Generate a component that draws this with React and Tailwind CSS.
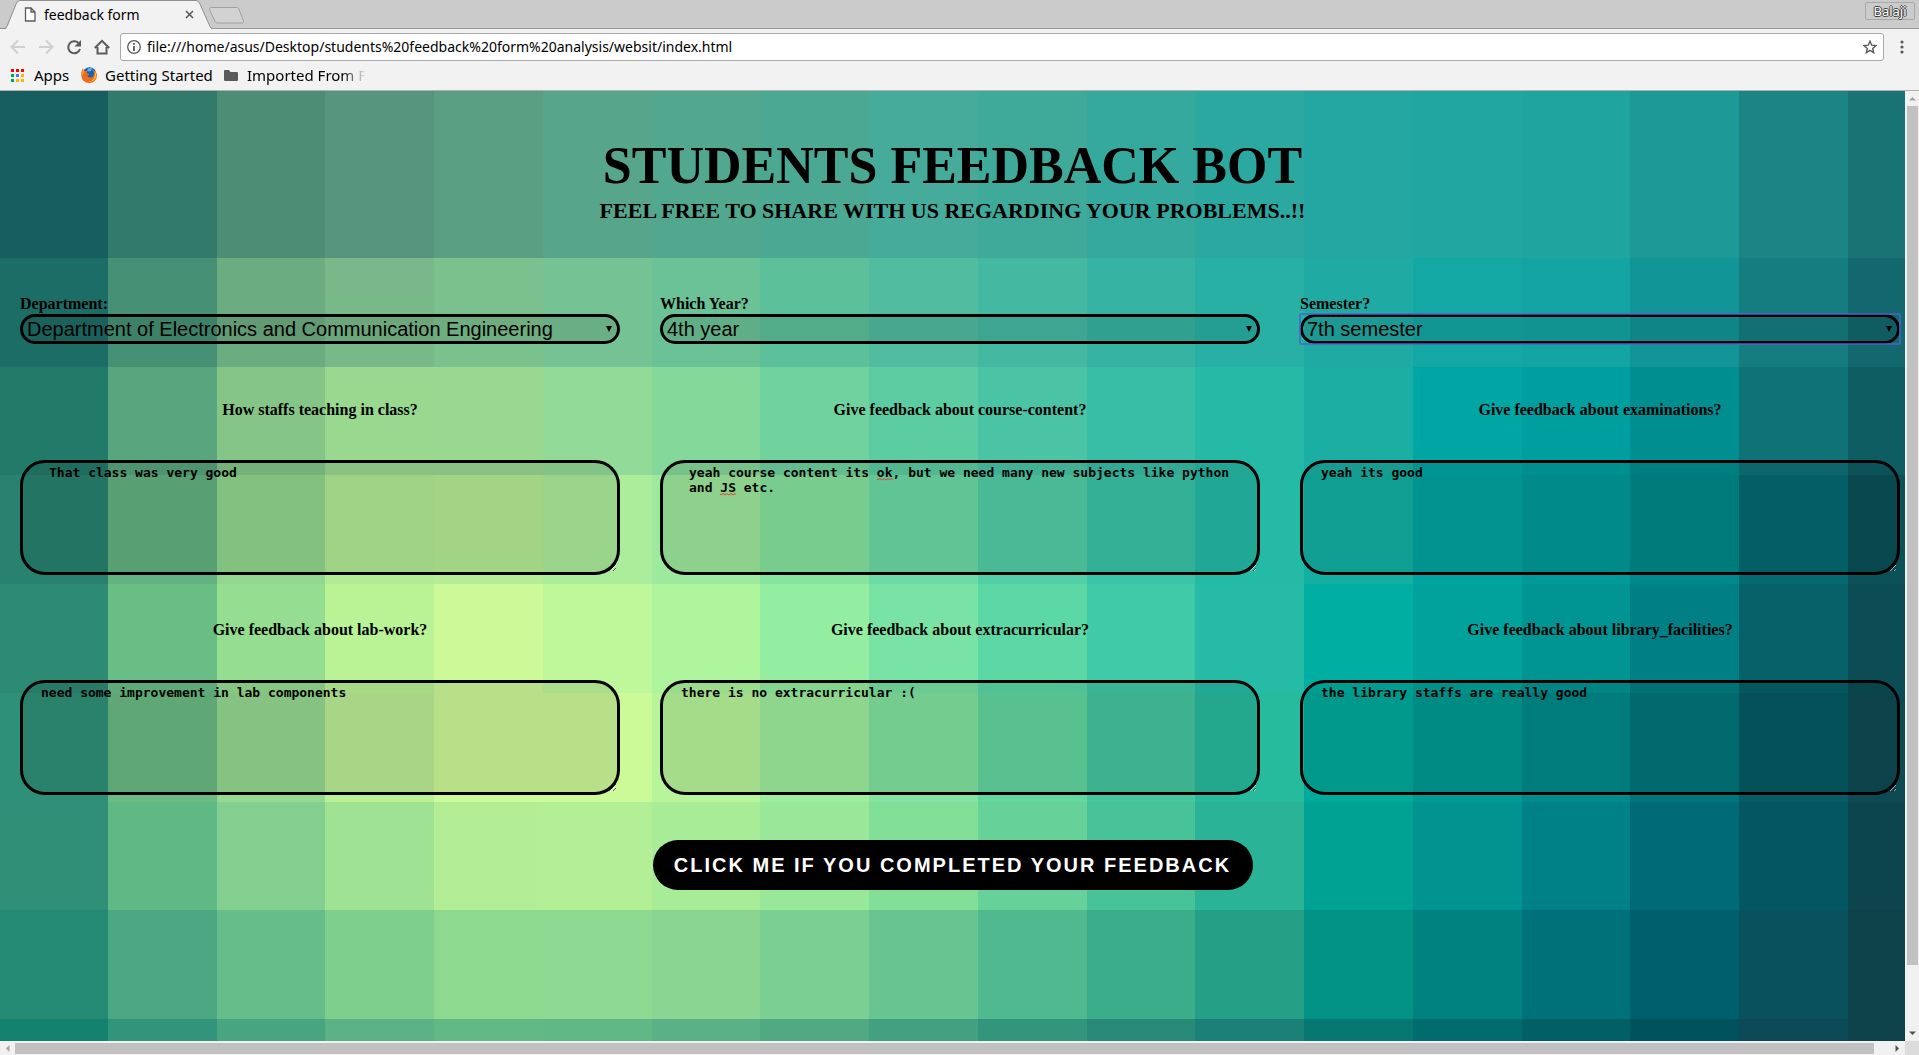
import React, { useState } from "react";

const TILE = 108.75;
const FIRST_BAND = 58;

const BANDS = [
  ["#175f5f", "#327a6c", "#4d8d76", "#57957e", "#5a9f84", "#57a58a", "#52a78f", "#4ba893", "#46ab9a", "#3fa99a", "#35a99d", "#2ba9a1", "#24a7a3", "#22a6a1", "#1fa4a0", "#1d9a97", "#1d8484", "#197375"],
  ["#1d6d67", "#469075", "#6cac81", "#79b989", "#7ac18e", "#75c294", "#6bc297", "#5cc09a", "#51bca0", "#44b8a1", "#36b3a2", "#29b0a4", "#1faba3", "#14a8a5", "#13a4a3", "#119597", "#157c7f", "#12686c"],
  ["#227a69", "#58a57e", "#85c688", "#9ad890", "#9ad892", "#91da98", "#84d899", "#70d39f", "#5ccda2", "#4ac4a5", "#38bea6", "#25baa5", "#1baea3", "#00a6a4", "#009f9f", "#008e90", "#0f7277", "#0d5d62"],
  ["#298270", "#63b282", "#91d78f", "#b3ea95", "#b6ec96", "#abed9a", "#9de99d", "#86e49f", "#6cdba6", "#53cfa8", "#3ac4a8", "#24baa6", "#12b0a3", "#00a4a0", "#009a9a", "#00898b", "#046a71", "#0b5157"],
  ["#2d8a74", "#69be86", "#95dd90", "#baf395", "#cdf999", "#bff89a", "#adf49c", "#94eea1", "#78e3a4", "#5bd8a6", "#40caa8", "#26bba7", "#00afa2", "#00a29b", "#009593", "#007f84", "#066169", "#0c4c54"],
  ["#2f9079", "#6abc83", "#96da91", "#bbef96", "#cdfa98", "#cdfa98", "#b8f59a", "#9fee9d", "#82e4a0", "#64d6a0", "#46c79f", "#27bb9e", "#00ab9b", "#009b93", "#008b8c", "#00767b", "#065b64", "#0e4a53"],
  ["#2f9077", "#60b985", "#82cf90", "#9fe293", "#b3ee96", "#b3ef97", "#a9ec98", "#99e798", "#81df98", "#66d199", "#48c299", "#2ab397", "#00a293", "#00938f", "#008087", "#006b77", "#025762", "#0d454f"],
  ["#258a73", "#4ba883", "#67bd89", "#7ece8e", "#8ed990", "#8ed991", "#8ad592", "#7bcf92", "#68c592", "#51b98f", "#3cad8a", "#25a087", "#039384", "#008280", "#007179", "#005f6d", "#08515d", "#0d424b"],
  ["#15816f", "#32947a", "#49a580", "#5cb284", "#62b986", "#61b887", "#5bb187", "#50a982", "#43a080", "#33957b", "#288a77", "#1b8077", "#077771", "#006c6d", "#006065", "#00535c", "#0c4a57", "#0d424b"],
];

const edge = (i) => Math.round(i * TILE) - 1;
const bandTop = (i) => (i === 0 ? 0 : Math.round(FIRST_BAND + i * TILE));

function Mosaic() {
  return (
    <svg className="absolute inset-0 size-full" aria-hidden="true" shapeRendering="crispEdges">
      {BANDS.map((band, r) =>
        band.map((fill, c) => (
          <rect
            key={`${r}-${c}`}
            x={edge(c)}
            y={bandTop(r)}
            width={edge(c + 1) - edge(c)}
            height={bandTop(r + 1) - bandTop(r)}
            fill={fill}
          />
        ))
      )}
    </svg>
  );
}

const SELECTS = [
  {
    id: "department",
    label: "Department:",
    options: ["Department of Electronics and Communication Engineering", "Department of Computer Science and Engineering"],
  },
  { id: "year", label: "Which Year?", options: ["4th year", "3rd year", "2nd year", "1st year"] },
  { id: "semester", label: "Semester?", options: ["7th semester", "8th semester"], active: true },
];

const QUESTIONS = [
  { id: "teaching", label: "How staffs teaching in class?", text: "That class was very good", wide: true },
  {
    id: "course",
    label: "Give feedback about course-content?",
    text: "yeah course content its ok, but we need many new subjects like python and JS etc.",
    wide: true,
    marks: true,
  },
  { id: "exams", label: "Give feedback about examinations?", text: "yeah its good" },
  { id: "lab", label: "Give feedback about lab-work?", text: "need some improvement in lab components" },
  { id: "extra", label: "Give feedback about extracurricular?", text: "there is no extracurricular :(" },
  { id: "library", label: "Give feedback about library_facilities?", text: "the library staffs are really good" },
];

function Choice({ id, label, options, active }) {
  return (
    <div className="flex flex-col">
      <label htmlFor={id} className="self-start text-base leading-5 font-bold">
        {label}
      </label>
      <div className="relative">
        <select
          id={id}
          className="block h-[30px] w-full appearance-none rounded-[15px] border-3 border-black bg-black/10 pl-1 font-['Liberation_Sans',sans-serif] text-xl leading-6 outline-none"
        >
          {options.map((o) => (
            <option key={o}>{o}</option>
          ))}
        </select>
        {active && <span className="pointer-events-none absolute -inset-px rounded-xs border-2 border-[#4a66cc]/75" />}
        <svg className="pointer-events-none absolute top-3 right-2 h-1.5 w-1.5" viewBox="0 0 6 6" aria-hidden="true">
          <path d="M0 0h6L3 6z" fill="#000" />
        </svg>
      </div>
    </div>
  );
}

function Squiggle({ className }) {
  return (
    <svg className={className} viewBox="0 0 16 3" aria-hidden="true">
      <path d="M0 1l1 1 2-1.500 2 1.500 2-1.500 2 1.500 2-1.500 2 1.500 2-1.500 1 .8" fill="none" stroke="#e0432f" />
    </svg>
  );
}

function Question({ id, label, text, wide, marks }) {
  const [value, setValue] = useState(text);
  return (
    <div className="flex flex-col gap-10">
      <label htmlFor={id} className="self-center text-base leading-5 font-bold">
        {label}
      </label>
      <div className="relative">
        <textarea
          id={id}
          value={value}
          onChange={(e) => setValue(e.target.value)}
          spellCheck={false}
          className={
            "block h-[115px] w-full rounded-[25px] border-3 border-black bg-black/10 py-0.5 pr-3 font-['DejaVu_Sans_Mono',monospace] text-[13px] leading-[15px] font-bold outline-none " +
            (wide ? "pl-[26px]" : "pl-[18px]")
          }
        />
        {marks && (
          <>
            <Squiggle className="pointer-events-none absolute top-[18px] left-[217px] h-[3px] w-4" />
            <Squiggle className="pointer-events-none absolute top-[33px] left-[60px] h-[3px] w-4" />
          </>
        )}
      </div>
    </div>
  );
}

function Tab() {
  return (
    <div className="relative flex h-[29px] w-[212px] items-center pr-[18px] pl-6">
      <svg className="absolute inset-0 size-full" viewBox="0 0 212 29" aria-hidden="true">
        <path d="M0 29h6L16.500 3Q17.500 .5 20 .5H196Q198.500 .5 199.500 3L211 28.500V29Z" fill="#f2f2f2" />
        <path d="M0 28.500H4Q6 28.500 7 26.500L16.500 3Q17.500 .5 20 .5H196Q198.500 .5 199.500 3L210 26.500Q211 28.500 212 28.500" fill="none" stroke="#8f8f8f" />
      </svg>
      <svg className="relative h-[15px] w-3" viewBox="0 0 12 15" aria-hidden="true">
        <path d="M1.500 1h5.500l4 4v9H1.500zM7 1v4h4" fill="#fff" stroke="#5a5a5a" strokeWidth="1.300" />
      </svg>
      <span className="relative ml-2 flex-1 text-sm leading-5 whitespace-nowrap">feedback form</span>
      <button type="button" aria-label="Close tab" className="relative">
        <svg className="size-[9px]" viewBox="0 0 9 9" aria-hidden="true">
          <path d="M1 1l7 7M8 1L1 8" stroke="#555" strokeWidth="1.500" />
        </svg>
      </button>
    </div>
  );
}

function BrowserChrome() {
  return (
    <header className="border-b border-[#b0b0b0] bg-[#f2f2f2] font-['Noto_Sans',sans-serif] text-black">
      <div className="flex h-[29px] border-b border-[#999] bg-[#cbcbcb]">
        <Tab />
        <svg className="mt-1.5 -ml-1 h-[19px] w-9" viewBox="0 0 36 19" aria-hidden="true">
          <path d="M3.500 1.500h25q1.500 0 2 1l5 12q.5 2-1 2.500h-25q-2 0-2.500-1.500L1.500 3.500q-.5-2 1.500-2z" fill="#d2d2d2" stroke="#a0a0a0" />
        </svg>
        <button
          type="button"
          className="mt-0.5 mr-1 ml-auto h-[18px] w-[50px] rounded-xs border border-[#a9a9a9] text-[13px] leading-4 text-white [text-shadow:1px_0_#444,-1px_0_#444,0_1px_#444,0_-1px_#444]"
        >
          Balaji
        </button>
      </div>
      <div className="flex h-9 items-center pl-2.5">
        <div className="flex w-[110px] items-center gap-3">
          <button type="button" aria-label="Back">
            <svg className="block size-4" viewBox="0 0 16 16" fill="none" stroke="#d0d0d0" strokeWidth="2" aria-hidden="true">
              <path d="M15 8H2M8 1.500L1.500 8 8 14.500" />
            </svg>
          </button>
          <button type="button" aria-label="Forward">
            <svg className="block size-4" viewBox="0 0 16 16" fill="none" stroke="#d0d0d0" strokeWidth="2" aria-hidden="true">
              <path d="M1 8h13M8 1.500L14.500 8 8 14.500" />
            </svg>
          </button>
          <button type="button" aria-label="Reload">
            <svg className="block size-4" viewBox="0 0 16 16" aria-hidden="true">
              <path d="M12.500 4A6 6 0 1 0 14 10" fill="none" stroke="#5a5a5a" strokeWidth="2" />
              <path d="M15 1v6.500H8.500z" fill="#5a5a5a" />
            </svg>
          </button>
          <button type="button" aria-label="Home">
            <svg className="block size-4" viewBox="0 0 16 16" fill="none" stroke="#5a5a5a" strokeWidth="2" aria-hidden="true">
              <path d="M.8 9L8 1.800 15.200 9M3.500 8v6.500h9V8" />
            </svg>
          </button>
        </div>
        <div className="flex h-7 flex-1 items-center rounded-[3px] border border-[#a9a9a9] bg-white px-1.5">
          <svg className="size-3.5" viewBox="0 0 14 14" aria-hidden="true">
            <circle cx="7" cy="7" r="6.300" fill="none" stroke="#5a5a5a" strokeWidth="1.300" />
            <path d="M7 6v5M7 3v1.800" stroke="#5a5a5a" strokeWidth="1.800" />
          </svg>
          <input
            type="text"
            aria-label="Address"
            defaultValue="file:///home/asus/Desktop/students%20feedback%20form%20analysis/websit/index.html"
            className="ml-1.5 flex-1 bg-transparent text-sm leading-5 outline-none"
          />
          <button type="button" aria-label="Bookmark this page">
            <svg className="block size-3.5" viewBox="0 0 14 14" aria-hidden="true">
              <path d="M7 1.200l1.700 4 4.300.4-3.300 2.800 1 4.300L7 10.400l-3.700 2.300 1-4.300L1 5.600l4.300-.4z" fill="none" stroke="#5a5a5a" strokeWidth="1.400" />
            </svg>
          </button>
        </div>
        <button type="button" aria-label="Menu" className="mr-[15px] ml-4">
          <svg className="block h-3.5 w-1" viewBox="0 0 4 14" fill="#5a5a5a" aria-hidden="true">
            <circle cx="2" cy="2" r="1.600" />
            <circle cx="2" cy="7" r="1.600" />
            <circle cx="2" cy="12" r="1.600" />
          </svg>
        </button>
      </div>
      <nav className="flex h-[25px] items-start pl-[11px] text-[15px] leading-5 whitespace-nowrap">
        <a href="#apps" className="flex w-[70px] items-center gap-2.5">
          <svg className="size-[13px]" viewBox="0 0 13 13" aria-hidden="true">
            <path d="M0 0h3v3H0zM5 0h3v3H5zM10 0h3v3h-3z" fill="#f00" />
            <path d="M0 5h3v3H0zM0 10h3v3H0z" fill="#00a651" />
            <path d="M5 5h3v3H5z" fill="#536dfe" />
            <path d="M10 5h3v3h-3zM5 10h3v3H5zM10 10h3v3h-3z" fill="#fbb800" />
          </svg>
          Apps
        </a>
        <a href="#getting-started" className="flex w-[143px] items-center gap-2">
          <svg className="size-4" viewBox="0 0 16 16" aria-hidden="true">
            <circle cx="8.500" cy="7" r="6.800" fill="#1a5fb4" />
            <path d="M7 1.500q3-1.300 5 .5-2 0-2 2-2 1-4-.5z" fill="#62b5ea" />
            <path d="M2 1Q1.500 3 3 4q2-.8 3.500.2Q5 6 6.500 6.500L8.500 7Q7.500 8.800 6 8.500 7 11 10 10.500q3-.8 3-4.500-.3-2-1.500-3 4.500 1 4.500 6-1 6.500-7.500 7Q1 15.500 .3 9 0 4 2 1z" fill="#ee6a1c" />
            <path d="M13.500 4q3 3.500.5 8-2.500 3.500-6.500 3 5-1 6-5 .7-3 0-6z" fill="#fdc733" />
            <path d="M2.500 1.500Q2 3.500 3.500 4.500 1.500 7 2 9.500.3 6 2.500 1.500z" fill="#f9a52b" />
          </svg>
          Getting Started
        </a>
        <a href="#imported" className="flex items-center gap-[9px]">
          <svg className="h-[11px] w-3.5 shrink-0" viewBox="0 0 14 11" aria-hidden="true">
            <path d="M0 1q0-1 1-1h4l1.500 2H13q1 0 1 1v7q0 1-1 1H1q-1 0-1-1z" fill="#5a5a5a" />
          </svg>
          <span className="bg-linear-to-r from-black from-80% to-transparent bg-clip-text text-transparent">Imported From F</span>
        </a>
      </nav>
    </header>
  );
}

function Arrow({ d, fill }) {
  return (
    <svg className="size-[7px] shrink-0" viewBox="0 0 7 7" aria-hidden="true">
      <path d={d} fill={fill} />
    </svg>
  );
}

export default function App() {
  return (
    <div className="flex h-screen flex-col overflow-hidden">
      <BrowserChrome />
      <div className="flex min-h-0 flex-1">
        <main className="relative min-w-0 flex-1 overflow-hidden bg-[#0d424b] font-['Liberation_Serif',serif] text-black">
          <Mosaic />
          <form className="relative pt-[43px]" onSubmit={(e) => e.preventDefault()}>
            <h1 className="text-center text-[52px] leading-16 font-bold">STUDENTS FEEDBACK BOT</h1>
            <h2 className="text-center text-[22px] leading-[26px] font-bold">FEEL FREE TO SHARE WITH US REGARDING YOUR PROBLEMS..!!</h2>
            <div className="-mr-[15px] px-5 pt-[70px]">
              <div className="grid grid-cols-3 gap-x-10">
                {SELECTS.map((s) => (
                  <Choice key={s.id} {...s} />
                ))}
              </div>
              <div className="mt-14 grid grid-cols-3 gap-x-10 gap-y-[45px]">
                {QUESTIONS.map((q) => (
                  <Question key={q.id} {...q} />
                ))}
              </div>
            </div>
            <button
              type="submit"
              className="mx-auto mt-[45px] block h-[50px] w-[600px] rounded-[25px] bg-black font-['Liberation_Sans',sans-serif] text-xl font-bold tracking-[2px] text-white"
            >
              CLICK ME IF YOU COMPLETED YOUR FEEDBACK
            </button>
          </form>
        </main>
        <div className="flex w-[14px] flex-col items-center bg-[#f1f1f1] py-1" aria-hidden="true">
          <Arrow d="M0 5.500h7L3.500 2z" fill="#a3a3a3" />
          <div className="mt-1 flex min-h-0 w-[11px] flex-1 flex-col">
            <div className="basis-[93%] bg-[#c1c1c1]" />
          </div>
          <Arrow d="M0 1.500h7L3.500 5z" fill="#505050" />
        </div>
      </div>
      <div className="flex h-3.5 items-center bg-[#f1f1f1]" aria-hidden="true">
        <div className="flex min-w-0 flex-1 items-center px-1">
          <Arrow d="M5.500 0v7L2 3.500z" fill="#a3a3a3" />
          <div className="mr-5 ml-1 h-[11px] flex-1 bg-[#c1c1c1]" />
          <Arrow d="M1.500 0v7L5 3.500z" fill="#505050" />
        </div>
        <div className="h-full w-[14px] bg-[#dcdcdc]" />
      </div>
    </div>
  );
}
